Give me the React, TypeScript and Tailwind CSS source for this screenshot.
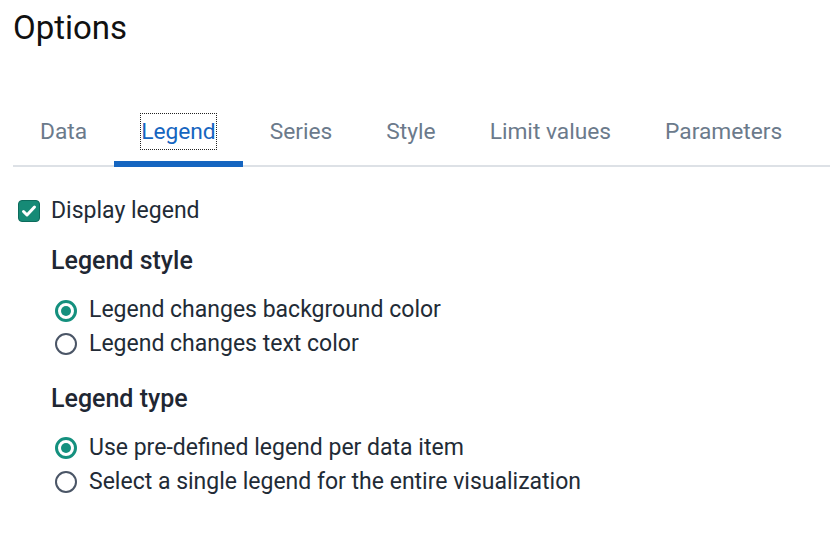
import React from "react";

const tabs = ["Data", "Legend", "Series", "Style", "Limit values", "Parameters"];

function Radio({ checked, label }: { checked?: boolean; label: string }) {
  return (
    <label className="flex items-center h-[34px] gap-[12px]">
      <span
        className={
          checked
            ? "flex items-center justify-center w-[22px] h-[22px] rounded-full border-[3px] border-[#14907e] bg-white"
            : "flex items-center justify-center w-[22px] h-[22px] rounded-full border-[2px] border-[#4a5566] bg-white"
        }
      >
        {checked && <span className="w-[10px] h-[10px] rounded-full bg-[#14907e]" />}
      </span>
      <span className="text-[23px] text-[#222b36]">{label}</span>
    </label>
  );
}

export default function App() {
  return (
    <div
      className="w-[830px] h-[540px] bg-white overflow-hidden pl-[13px]"
      style={{ fontFamily: "Roboto, 'Noto Sans', sans-serif" }}
    >
      <h1 className="pt-[8px] text-[33px] leading-[40px] text-[#111111] font-normal">Options</h1>
      <div className="mt-[48px] flex border-b-[2px] border-[#dde1e6]">
        {tabs.map((t) => {
          const active = t === "Legend";
          return (
            <div
              key={t}
              className={
                active
                  ? "-mb-[2px] px-[27px] pt-[18px] pb-[12px] border-b-[6px] border-[#1565c0]"
                  : "-mb-[2px] px-[27px] pt-[18px] pb-[18px]"
              }
            >
              <span
                className={
                  active
                    ? "block h-[35px] leading-[35px] text-[22.75px] text-[#1565c0] outline outline-1 outline-dotted outline-[#222]"
                    : "block h-[35px] leading-[35px] text-[22.75px] text-[#6b7a8b]"
                }
              >
                {t}
              </span>
            </div>
          );
        })}
      </div>
      <div className="pl-[5px] pt-[32px]">
        <label className="flex items-center h-[24px] gap-[11px]">
          <span className="flex items-center justify-center w-[22px] h-[22px] rounded-[4px] bg-[#168a76] border border-[#0d6b5c]">
            <svg width="20" height="20" viewBox="0 0 20 20" fill="none">
              <path d="M4.5 10.5l3.5 3.5L15.5 6" stroke="white" strokeWidth="3" strokeLinecap="round" strokeLinejoin="round" />
            </svg>
          </span>
          <span className="text-[23px] text-[#222b36]">Display legend</span>
        </label>
        <div className="pl-[33px]">
          <div className="mt-[23px] text-[25px] font-medium text-[#1f2733] leading-[30px]">Legend style</div>
          <div className="mt-[18px] pl-[4px]">
            <div className="h-[33px] flex items-center">
              <Radio checked label="Legend changes background color" />
            </div>
            <Radio label="Legend changes text color" />
          </div>
          <div className="mt-[23px] text-[25px] font-medium text-[#1f2733] leading-[30px]">Legend type</div>
          <div className="mt-[17px] pl-[4px]">
            <Radio checked label="Use pre-defined legend per data item" />
            <Radio label="Select a single legend for the entire visualization" />
          </div>
        </div>
      </div>
    </div>
  );
}
